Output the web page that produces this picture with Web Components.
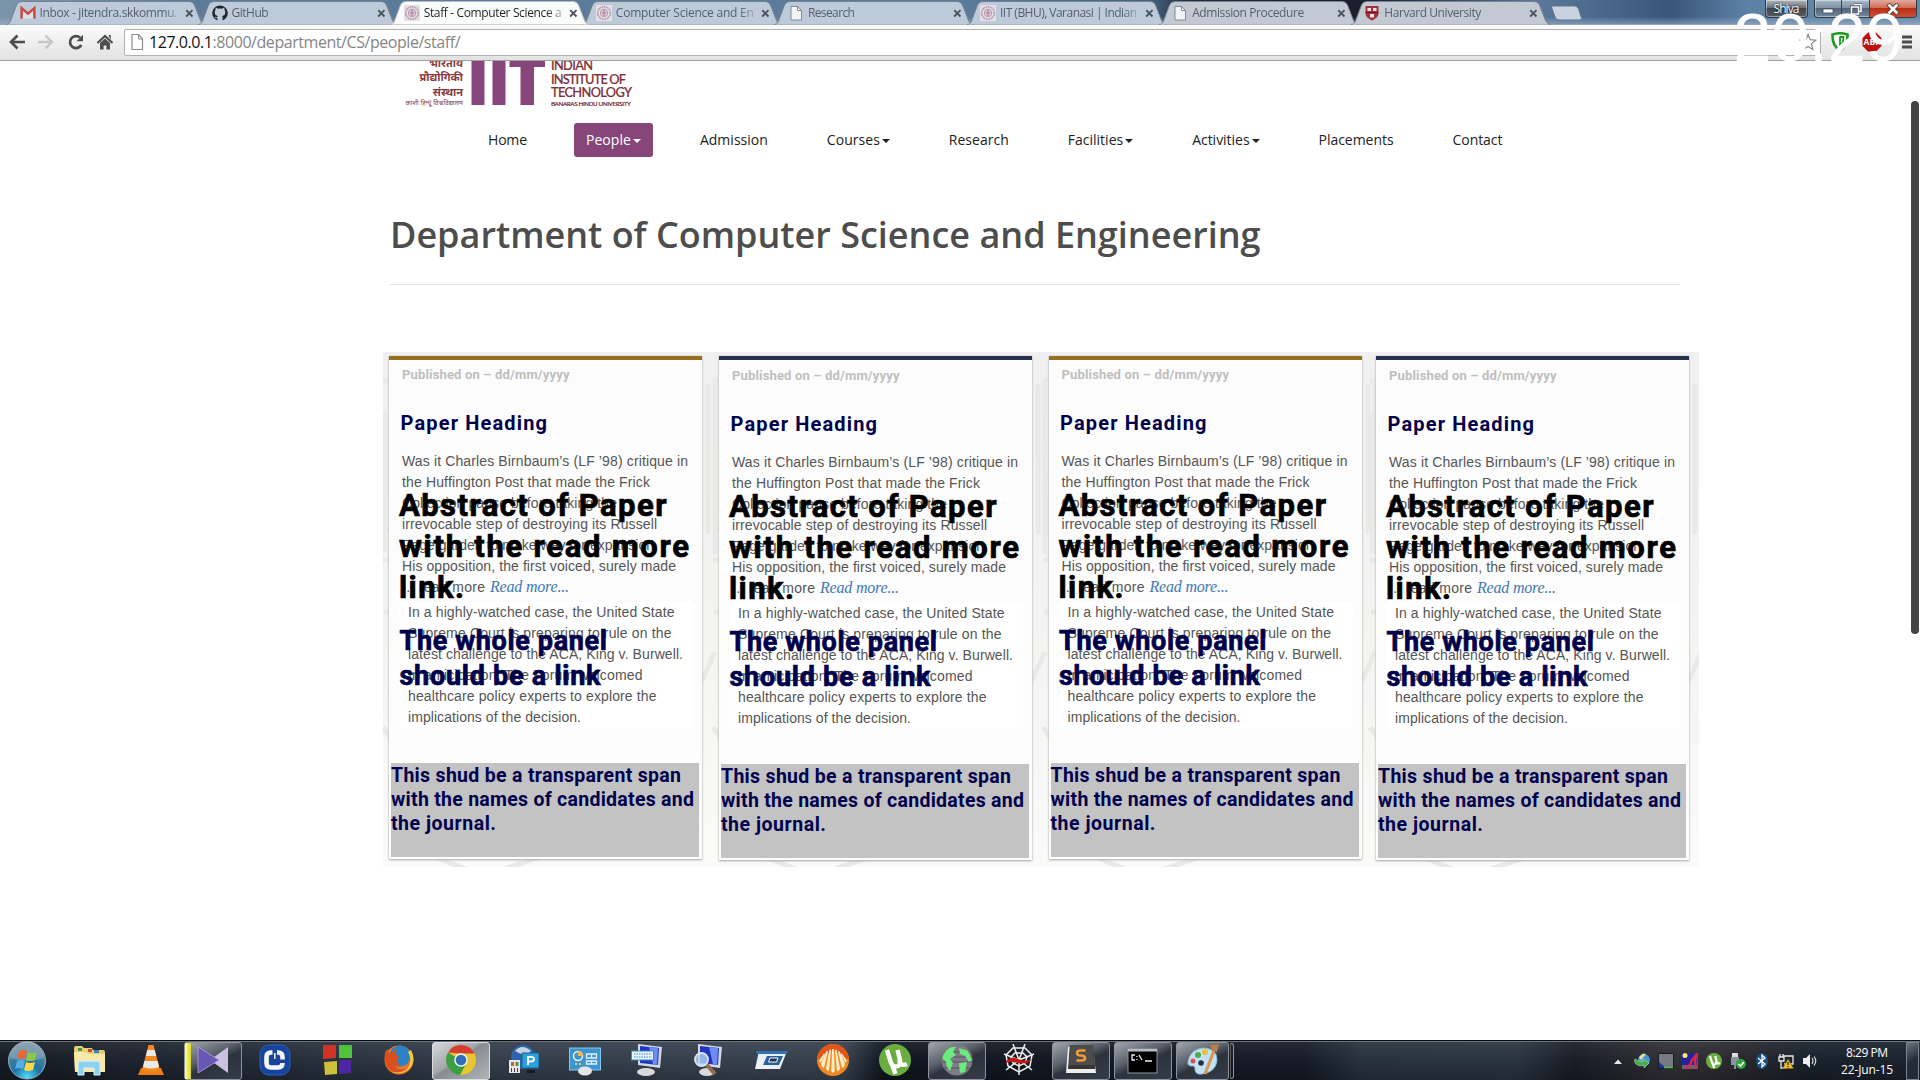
<!DOCTYPE html>
<html lang="en">
<head>
<meta charset="utf-8">
<title>Staff - Computer Science and Engineering</title>
<style>
html,body{margin:0;height:100%;overflow:hidden;background:#fff}
body{font-family:"Open Sans","Noto Sans",sans-serif}
</style>
</head>
<body>
<desktop-screen></desktop-screen>
<script>
const define = (name, html, setup) => {
  const tpl = document.createElement('template');
  tpl.innerHTML = html;
  customElements.define(name, class extends HTMLElement {
    connectedCallback() {
      if (this.shadowRoot) return;
      this.attachShadow({mode: 'open'}).appendChild(tpl.content.cloneNode(true));
      if (setup) setup(this, this.shadowRoot);
    }
  });
};

/* A single line of text tracked out (or in) to a given width. */
const lines = [];
define('text-line', `<style>:host{display:block;white-space:pre}span{display:inline-block;line-height:inherit}</style><span><slot></slot></span>`, h => lines.push(h));
const fitLines = () => lines.forEach(h => {
  const w = +h.getAttribute('w'); if (!w) return;
  const s = h.shadowRoot.querySelector('span');
  s.style.letterSpacing = '0px';
  const n = h.textContent.length, nat = s.getBoundingClientRect().width;
  s.style.letterSpacing = ((w - nat) / (n - 1)) + 'px';
  h.style.width = w + 'px';
});

const seal = `<rect width="16" height="16" fill="#e3dfe6"/><circle cx="8" cy="8" r="6.300" fill="none" stroke="#b492a7" stroke-width="1.600" stroke-dasharray="1.200 .6"/><circle cx="8" cy="8" r="3.600" fill="#dfced8" stroke="#b492a7"/><path d="M8 5v6M6 8h4" stroke="#a57a94"/>`;
const page = `<path d="M3 1.500h6.500l4 4v9.500H3z" fill="#f4f5f6" stroke="#84898f"/><path d="M9.500 1.500v4h4" fill="none" stroke="#84898f"/>`;
const fav = {
  gmail: `<path d="M3 4v9.500h10V4L8 8.500z" fill="#eee" opacity=".7"/><path d="M1.600 13.500V3.200L8 8.600l6.400-5.400v10.300" fill="none" stroke="#c9493d" stroke-width="2.400"/>`,
  github: `<path d="M8 .6a7.600 7.600 0 0 0-2.600 14.800v-2.300c-1.500.3-2.300-.2-2.800-1.400.8-.1 1.400 1 2.800.6 0-.6.2-1 .5-1.300C3.700 10.700 2.700 9.700 2.700 7.300c0-.9.3-1.600.9-2.200-.2-.7-.1-1.600.1-2.300.9 0 1.600.4 2.300.9 1.300-.3 2.700-.3 4 0 .7-.5 1.400-.9 2.300-.9.2.7.3 1.600.1 2.300.6.600.9 1.300.9 2.200 0 2.400-1 3.400-3.200 3.700.4.300.5.900.5 1.600v2.800A7.600 7.600 0 0 0 8 .6z" fill="#20252c"/>`,
  seal, page,
  harvard: `<path d="M1.500 1h13v7.500c0 3.500-3.500 5.500-6.500 7-3-1.500-6.500-3.500-6.500-7z" fill="#a3303c"/><path d="M3.500 3h3.500v3H3.500zM9 3h3.500v3H9zM6 9h4v3.500H6z" fill="#efdfe0"/><path d="M1.500 7.500h13" stroke="#6b1a24"/>`
};

define('browser-tab', `<style>
:host{display:block;position:relative;width:200px;height:25px;margin-right:-7.900px;flex:none;color:#56606c;font:12px/16px "Open Sans",sans-serif}
:host([active]){color:#1f2226;z-index:2}
.shape{position:absolute;inset:0}
.row{position:relative;display:flex;align-items:center;padding:5px 0 0 13.500px;height:16px}
.label{margin-left:4px;width:140px;overflow:hidden;-webkit-mask:linear-gradient(90deg,#000 88%,#0003)}
</style><svg class="shape" width="200" height="25"><path class="p" d="M0 24.500C4 24.500 4.500 21 6 17L10.500 5Q12 1.500 16 1.500H183Q187 1.500 188.500 5L193.500 18Q195.500 24.500 200 24.500" stroke="#76828f" stroke-width="1"/></svg>
<div class="row"><svg class="icon" width="16" height="16"></svg><div class="label"><slot></slot></div><svg width="9" height="9" style="margin-left:5px"><path d="M1.200 1.200l6.300 6.300M7.500 1.200L1.200 7.500" stroke="#4c545d" stroke-width="1.900"/></svg></div>`,
(h, r) => {
  r.querySelector('.icon').innerHTML = fav[h.getAttribute('icon')];
  r.querySelector('.p').setAttribute('fill', h.hasAttribute('active') ? '#fafbfb' : h.hasAttribute('grey') ? '#c3c9d2' : '#bdcad9');
  if (h.hasAttribute('active')) r.querySelector('.p').setAttribute('stroke', '#b5bcc4');
});

define('browser-chrome', `<style>
:host{display:block;position:relative;height:61px;overflow:hidden}
.strip{height:25px;box-sizing:border-box;display:flex;padding-left:6px;border-bottom:1px solid #9aa4ae;background:linear-gradient(180deg,transparent 70%,#9fb8d088),linear-gradient(90deg,#7d95ab 0,#5d7b98 10%,#5b7b9b 50%,#46617c 60%,#212b39 62%,#1b1e2c 71%,#3b5269 76%,#59789a 80%,#39577a 87%,#5d81a6 91%,#688aa9)}
.new{margin:5px 0 0 8px}
.fill{flex:1}
.user,.win{height:18px;border:1px solid #2d3b4a;border-top:0;border-radius:0 0 4px 4px;box-sizing:border-box;box-shadow:inset 0 0 0 1px #ffffff66;display:flex}
.user{width:43px;margin-right:6px;background:linear-gradient(#b5b9bf,#6c7178 45%,#41464e 50%,#565e68);color:#fff;font:12px/18px "Open Sans";justify-content:center;text-shadow:0 0 2px #000}
.win{width:103px;margin-right:3px;background:linear-gradient(#a9bacb,#8192a4 45%,#526477 50%,#768a9e);overflow:hidden}
.win i{width:27px;border-right:1px solid #35424f;display:flex;align-items:center;justify-content:center}
.win i:last-child{width:47px;border:0;background:linear-gradient(#e2ab9f,#cf6d57 45%,#b92c16 50%,#c75336)}
.bar{height:36px;box-sizing:border-box;display:flex;align-items:center;border-bottom:1px solid #a0a0a0;background:linear-gradient(#fbfbfb,#e2e2e2);padding:0 0 1px 8px}
.bar>svg{flex:none}
.omni{margin-left:10px;width:1697px;height:27px;box-sizing:border-box;border:1px solid #b0b0b0;border-radius:2px;background:#fff;display:flex;align-items:center;padding:0 3px 0 4px;font:16px/24px "Open Sans",sans-serif;color:#858585}
.omni b{font-weight:400;color:#111}
.clock{position:absolute;left:1733.500px;top:-1px;z-index:5;font:68px/77px "Liberation Sans",sans-serif;color:#fff;white-space:pre}
</style>
<div class="strip">
<browser-tab icon="gmail"><text-line w="138">Inbox - jitendra.skkommu.</text-line></browser-tab>
<browser-tab icon="github"><text-line w="37">GitHub</text-line></browser-tab>
<browser-tab icon="seal" active><text-line w="138">Staff - Computer Science a</text-line></browser-tab>
<browser-tab icon="seal"><text-line w="138">Computer Science and En</text-line></browser-tab>
<browser-tab icon="page"><text-line w="47">Research</text-line></browser-tab>
<browser-tab icon="seal"><text-line w="137">IIT (BHU), Varanasi | Indian</text-line></browser-tab>
<browser-tab icon="page" grey><text-line w="112">Admission Procedure</text-line></browser-tab>
<browser-tab icon="harvard" grey><text-line w="97">Harvard University</text-line></browser-tab>
<svg class="new" width="31" height="16"><path d="M1.500 1h22q3 0 4 3l3 9q.5 2-2 2H8q-3 0-4-3L.8 3Q.5 1 1.500 1z" fill="#c9d3df" stroke="#65788c"/></svg>
<div class="fill"></div>
<div class="user"><text-line w="26">Shiva</text-line></div>
<div class="win"><i><svg width="12" height="12"><path d="M1 6h10v4H1z" fill="#fff" stroke="#3d4a58" stroke-width=".8"/></svg></i><i><svg width="12" height="12"><path d="M4 1.500h7v7H9M1.500 4h7v7h-7z" fill="none" stroke="#3d4a58" stroke-width="3"/><path d="M4 1.500h7v7H9M1.500 4h7v7h-7z" fill="none" stroke="#fff" stroke-width="1.600"/></svg></i><i><svg width="14" height="12"><path d="M2 1l10 10M12 1L2 11" stroke="#5a2a24" stroke-width="4.500"/><path d="M2.500 1.500l9 9M11.500 1.500l-9 9" stroke="#fff" stroke-width="2.800"/></svg></i></div>
</div>
<div class="bar">
<svg width="18" height="18"><path d="M9.500 2.500L3 9l6.500 6.500M3.500 9H17" fill="none" stroke="#4d4d4d" stroke-width="2.700"/></svg>
<svg width="18" height="18" style="margin-left:11px"><path d="M8.500 2.500L15 9l-6.500 6.500M14.500 9H1" fill="none" stroke="#c6c6c6" stroke-width="2.400"/></svg>
<svg width="18" height="18" style="margin-left:12px"><path d="M14.300 12A6 6 0 1 1 13 4.600" fill="none" stroke="#4d4d4d" stroke-width="2.700"/><path d="M9.500 8.200H16V1.700z" fill="#4d4d4d"/></svg>
<svg width="18" height="18" style="margin-left:11px"><path d="M1.500 10L9 3l7.500 7" fill="none" stroke="#4d4d4d" stroke-width="2.300"/><path d="M4 10l5-4.500 5 4.500v6.500h-3.600v-4H7.600v4H4zM12.500 2h2.200v5z" fill="#4d4d4d"/></svg>
<div class="omni"><svg width="17" height="18"><path d="M3 1.500h6.500l4 4.500v10.500H3z" fill="#fff" stroke="#8c8c8c" stroke-width="1.200"/><path d="M9.500 1.500V6h4" fill="none" stroke="#8c8c8c"/></svg>
<text-line w="311.500" style="margin-left:3px"><b>127.0.0.1</b>:8000/department/CS/people/staff/</text-line><div class="fill"></div>
<svg width="18" height="18"><path d="M9 1.500l2.200 5.200 5.600.5-4.300 3.700 1.300 5.500L9 13.500l-4.800 2.900 1.300-5.500L1.200 7.200l5.600-.5z" fill="#fff" stroke="#888" stroke-width="1.200"/></svg></div>
<svg width="18" height="20" style="margin-left:10px"><path d="M1.500 2.500q7.500-2.500 15 0 .5 11-7.500 16Q1 13.500 1.500 2.500z" fill="#fff" stroke="#1c9a22" stroke-width="2.600"/><path d="M9 4.500v11M9 5h3.500q0 6-3.500 9" stroke="#1c9a22" stroke-width="1.800" fill="none"/></svg>
<svg width="20" height="20" style="margin-left:13px"><path d="M6 .5h8l5.500 5.500v8L14 19.500H6L.5 14V6z" fill="#b9120f"/><text x="1.500" y="13.300" font-family="Open Sans" font-weight="700" font-size="9" fill="#fff" textLength="17" lengthAdjust="spacingAndGlyphs">ABP</text></svg>
<svg width="14" height="16" style="margin-left:18px"><path d="M2 3h10M2 8h10M2 13h10" stroke="#4d4d4d" stroke-width="2.800"/></svg>
</div>
<div class="clock">20:29</div>`);

define('iit-logo', `<style>
:host{display:flex;height:47px;width:260px;overflow:hidden;margin-left:401px}
.hi{width:62px;display:flex;flex-direction:column;align-items:flex-end;color:#8b3a3f;font:700 11px/14.300px "Noto Sans Devanagari","Noto Sans",sans-serif;margin-top:-4px;white-space:nowrap}
.hi small{font-weight:400;font-size:6.700px;line-height:8px}
svg{margin-left:8px;flex:none}
.en{margin:-2px 0 0 5px;color:#7d3037;font:500 12.800px/13.600px Lato,sans-serif;-webkit-text-stroke:.2px currentColor}
.en text-line:last-child{font-size:6.200px;line-height:8px}
</style>
<div class="hi"><div>भारतीय</div><div>प्रौद्योगिकी</div><div>संस्थान</div><small>काशी हिन्दू विश्वविद्यालय</small></div>
<svg width="75" height="44"><path d="M.5 0h13v44H.500zM21.500 0h13v44h-13zM38.500 0H74v6H63v38H49.500V6h-11z" fill="#874679"/></svg>
<div class="en"><text-line w="42">INDIAN</text-line><text-line w="75">INSTITUTE OF</text-line><text-line w="81">TECHNOLOGY</text-line><text-line w="80">BANARAS HINDU UNIVERSITY</text-line></div>`);

define('nav-item', `<style>
:host{display:flex;align-items:center;height:34px;padding:0 12px;border-radius:3px;font:14px/20px "Open Sans",sans-serif;color:#222}
:host([active]){background:#874679;color:#fff}
i{display:none;margin:2px 0 0 2px;border:4px solid transparent;border-top-color:currentColor;border-bottom:0}
:host([menu]) i{display:block}
</style><slot></slot><i></i>`);

define('paper-card', `<style>
:host{display:flex;flex-direction:column;box-sizing:border-box;width:313px;height:503px;padding:7px 0 0;border-top:4px solid #95701f;position:relative;background:#fdfdfdeb;box-shadow:0 1px 2px #aaa,0 0 1px #bbb;color:#555;font:14px/21px "Liberation Sans",Arial,sans-serif}
:host([blue]){border-top-color:#27334c;padding-top:8px;height:504px}
.date,h3,.over,footer{font-family:Roboto,sans-serif;font-weight:700}
.date{font-size:13px;line-height:15px;color:#bfbfbf;padding-left:13px}
h3{margin:29px 0 0 11.500px;font-size:20px;line-height:24px;color:#00004d}
.one{margin:15.500px 0 0 13px}
.last{display:flex}
a{color:#4078b3;font:italic 16px/21px "Liberation Serif",serif;margin:-1px 0 1px 5px}
.two{margin:4px 9px 0 10px;padding-left:9px;background:#fffc}
footer{margin:auto 3px 2px 2px;height:94px;box-sizing:border-box;padding:.5px 0 0;background:#c3c3c3;color:#00004d;font-size:19.500px;line-height:24px}
.over{position:absolute;left:10px;top:125px;color:#000;font-size:31px;line-height:41px;-webkit-text-stroke:.7px currentColor}
:host([blue]) .over{top:126px}
.over div{margin:16px 0 0 .5px;color:#00004d;font-size:27px;line-height:34.500px}
</style>
<div class="date"><text-line w="167.500">Published on – dd/mm/yyyy</text-line></div>
<h3><text-line w="146.500">Paper Heading</text-line></h3>
<div class="one">
<text-line w="286">Was it Charles Birnbaum’s (LF ’98) critique in</text-line><text-line w="248">the Huffington Post that made the Frick</text-line><text-line w="215">Collection pause before taking the</text-line><text-line w="255">irrevocable step of destroying its Russell</text-line><text-line w="256">Page garden to make way for expansion.</text-line><text-line w="274">His opposition, the first voiced, surely made</text-line><div class="last"><text-line w="83">... read more</text-line><a><text-line w="79">Read more...</text-line></a></div></div>
<div class="two"><text-line w="266.500">In a highly-watched case, the United State</text-line><text-line w="263.500">Supreme Court is preparing to rule on the</text-line><text-line w="275">latest challenge to the ACA, King v. Burwell.</text-line><text-line w="234.500">In anticipation, The Forum welcomed</text-line><text-line w="248.500">healthcare policy experts to explore the</text-line><text-line w="173">implications of the decision.</text-line></div>
<footer><text-line w="290">This shud be a transparent span</text-line><text-line w="303">with the names of candidates and</text-line><text-line w="105">the journal.</text-line></footer>
<div class="over"><text-line w="267.500">Abstract of Paper</text-line><text-line w="290">with the read more</text-line><text-line w="65">link.</text-line><div><text-line w="207.500">The whole panel</text-line><text-line w="201">should be a link</text-line></div></div>`);

define('paper-panel', `<style>
:host{display:flex;position:relative;box-sizing:border-box;width:1316px;height:515px;padding:4px 0 0 6px;margin:67px 0 0 383px;background:linear-gradient(#f0f0f0,#f3f3f2 50%,#fafaf9)}
.bg{position:absolute;inset:0}
paper-card+paper-card{margin-left:17px}
paper-card:nth-of-type(3){margin-left:16.500px}
paper-card:last-of-type{margin-left:14.500px}
</style>
<svg class="bg" width="1316" height="515" fill="none" stroke="#e9e9e7" stroke-width="5"></svg>
<paper-card></paper-card><paper-card blue></paper-card><paper-card></paper-card><paper-card blue></paper-card>`,
(h, r) => {
  let d = '';
  for (const x of [0, 330, 660, 987]) d += `M${x} 30q12 -6 18 0M${x} 178h26M${x} 208h14M${x+2} 60v140M${x+1} 260h16v75M${x} 375l24 35v60M${x+40} 500l60 24 60 -20M${x+325} 32v150M${x+332} 32v170M${x+318} 330l14 -30`;
  r.querySelector('.bg').innerHTML = `<path d="${d}"/>`;
});

define('web-page', `<style>
:host{display:block;position:relative;height:979px;overflow:hidden;background:#fff}
nav{display:flex;gap:34.950px;margin:15px 0 0 476px}
h1{margin:53px 0 0 390px;font:600 36px/50px "Open Sans",sans-serif;color:#4d4d4d}
hr{margin:24px 240px 0 390px;border:0;height:1px;background:#ddd}
.thumb{position:absolute;left:1911px;top:40px;width:8px;height:533px;border-radius:4px;background:#434343}
</style>
<iit-logo></iit-logo>
<nav><nav-item><text-line w="39">Home</text-line></nav-item><nav-item active menu><text-line w="45">People</text-line></nav-item><nav-item><text-line w="68">Admission</text-line></nav-item><nav-item menu><text-line w="53">Courses</text-line></nav-item><nav-item><text-line w="60">Research</text-line></nav-item><nav-item menu><text-line w="55.500">Facilities</text-line></nav-item><nav-item menu><text-line w="57.500">Activities</text-line></nav-item><nav-item><text-line w="75">Placements</text-line></nav-item><nav-item><text-line w="50">Contact</text-line></nav-item></nav>
<h1><text-line w="870.500">Department of Computer Science and Engineering</text-line></h1>
<hr>
<paper-panel></paper-panel>
<div class="thumb"></div>`);

const app = {
explorer:`<path d="M1 4q0-2 2-2h6l2 2h8l1 2h10q2 0 2 2v20H2z" fill="#e8cf74"/><path d="M5 4h4v3H5z" fill="#3f9b48"/><path d="M15 5h4v3h-4z" fill="#c04d3c"/><path d="M21 6h5v3h-5z" fill="#3b83c6"/><path d="M1 8h12l2 2h17v18H2z" fill="#f7e9a8"/><path d="M5 31V19q0-2 3-2h16q3 0 3 2v12h-6v-7H11v7z" fill="#8fd0ee" stroke="#d9f4ff"/>`,
vlc:`<path d="M6 24h20l3 7H3z" fill="#ee7d16"/><path d="M13.500 1h5l6.500 25q-9 4-18 0z" fill="#f28a1e"/><path d="M12.300 6h7.400l1.500 6H10.800zM9.300 17h13.400l1.300 6q-8 3-16 0z" fill="#e9e9e9"/>`,
km:`<path d="M31 3v26L13 16z" fill="#c9c1dd"/><path d="M1 3l21 13L1 29z" fill="#6a56b5" stroke="#b4a6e0" stroke-width=".8"/>`,
cc:`<rect x="1" y="1" width="30" height="30" rx="9" fill="#17459b" stroke="#2a62bb"/><path d="M13.500 8.500H12q-4.500 0-4.500 4.500v6q0 4.500 4.500 4.500h7q4.500 0 4.500-4.500M18 8.500h1q4.500 0 4.500 4.500v2.500" fill="none" stroke="#f3f6fa" stroke-width="4.600"/><path d="M15.800 9v6" stroke="#f3f6fa" stroke-width="1.500"/>`,
sq:`<path d="M2 1h13v13L2 15z" fill="#cf3328"/><path d="M18 1h13v13H18z" fill="#4fc13c"/><path d="M3 18l13-1v13L4 31z" fill="#c9c03c"/><path d="M18 16h12v13l-12 1z" fill="#4d27a3"/>`,
ff:`<circle cx="16" cy="16" r="14.500" fill="#e8762a"/><circle cx="17" cy="12" r="10.500" fill="#2a82c4"/><path d="M28 6q5 9 0 17-8 9-19 5 14 2 17-6 3-7-1-14z" fill="#f6c945"/><path d="M2 8q-2 12 5 18 8 5 16-1-9 2-11-3 4 0 5-2-3-1-3-4 1-2 3-3-4-1-5-3 1-3 3-4-5 0-8 3-2-1-2-4z" fill="#d9501e"/>`,
chrome:`<circle cx="16" cy="16" r="15" fill="#e8c62e"/><path d="M3 8.500A15 15 0 0 1 29.500 9.500H16z" fill="#d73c31"/><path d="M3 8.500A15 15 0 0 0 15 31l6-11-5-4z" fill="#3c9f46"/><circle cx="16" cy="16" r="6.800" fill="#f2f2f2"/><circle cx="16" cy="16" r="5.300" fill="#2f6fb7"/>`,
p:`<circle cx="16" cy="13" r="12" fill="#2b64ad"/><path d="M8 7q7-8 16 0l-6 5z" fill="#c8d5e2"/><path d="M15 9h17v15H15z" fill="#2ba1dc" stroke="#1c5f8f"/><path d="M21 21v-8h3q3.500 0 3 2.500-.5 2-3 2h-3" fill="none" stroke="#fff" stroke-width="1.800"/><path d="M2 16h11v13H2z" fill="#e6e6e3"/><path d="M4 18h3v4H4z" fill="#cf6233"/><path d="M8.500 18h3v4h-3z" fill="#469746"/><path d="M4.500 24v4M7.500 24v4M10.500 24v4" stroke="#444"/><path d="M20 26h8v3h-8z" fill="#161a20"/>`,
cp:`<rect x=".5" y="4" width="31" height="22" fill="#3d95cd" stroke="#83c7ec"/><circle cx="9" cy="12" r="4.500" fill="none" stroke="#e7f5fc" stroke-width="1.500"/><path d="M9 12V7a5 5 0 0 1 5 5z" fill="#f3b64a"/><path d="M17.500 10h10v4h-10zM17.500 17h10v3h-10zM22.500 10v4M22.500 17v3" fill="none" stroke="#dff1fb" stroke-width="1.300"/><path d="M6 20h7" stroke="#f3c56f" stroke-width="2" stroke-dasharray="2 2"/><ellipse cx="16" cy="27" rx="7" ry="4.500" fill="#e3e5e7"/>`,
kb:`<path d="M7 0l24 3-2 21-22-3z" fill="#d5d9e0"/><path d="M9 2l19 2-1 17-18-2z" fill="#2233c0"/><path d="M18 3l9 1-1 17-4-1z" fill="#6e8df2"/><ellipse cx="15" cy="28" rx="9" ry="4" fill="#d7d9db"/><rect x=".5" y="7" width="22" height="9" fill="#e7f4fb" stroke="#388ac2"/><path d="M3 10h18M3 13h18" stroke="#388ac2" stroke-dasharray="1.500 1"/>`,
mag:`<path d="M5 0l24 3-2 21-22-3z" fill="#d5d9e0"/><path d="M7 2l19 2-1 17-18-2z" fill="#2233c0"/><path d="M16 3l9 1-1 17-4-1z" fill="#6e8df2"/><ellipse cx="14" cy="28" rx="8" ry="4" fill="#d7d9db"/><path d="M13 20l9 10" stroke="#946a4c" stroke-width="4"/><circle cx="8.500" cy="15.500" r="6.500" fill="#b3d5f3cc" stroke="#dae5ee" stroke-width="1.800"/>`,
run:`<path d="M4 7h28l-7 18H0z" fill="#e9f0f6"/><path d="M1 7h31l-1 3H2z" fill="#2f72b5"/><path d="M12 12h16l-4 9H8z" fill="#2a5f9f"/><path d="M15 14h8l-1.500 4h-8z" fill="#18324f" stroke="#fff"/>`,
bit:`<circle cx="16" cy="16" r="16" fill="#ef8a22"/><path d="M0 16a16 16 0 0 1 32 0L16 6z" fill="#e0561a"/><path d="M15.200 5h1.600l1 22q-1.800 3-3.600 0zM12.500 5.500l1.500.5-2 21q-2.500 0-3-2.500zM19.500 5.500l-1.500.5 2 21q2.500 0 3-2.500zM9.500 7l1.500.5L7 24q-2.500-1-3-4zM22.500 7l-1.500.5L25 24q2.500-1 3-4zM7 9.500l1 .500-4 8.500-2-1.500zM25 9.500l-1 .500 4 8.500 2-1.500z" fill="#fdeec8"/>`,
ut:`<circle cx="16" cy="16" r="16" fill="#6aad40"/><path d="M8 6l4 13q2 5 7 3 3-2 2-6l-2.500-10M20 16q2 7 8 4M12.500 19l4 11" stroke="#fff" stroke-width="4.400" fill="none"/>`,
globe:`<circle cx="16" cy="16" r="15.500" fill="#7c7b86"/><path d="M3 8h26M1 13h30M1 18h30M3 24h26" stroke="#585461"/><path d="M4 8q5-6 11-5l-3 5 3 3-6 4 3 4-3 8q-4-4-4-9l-4-4zM18 4l9 3 4 9-3 2-4-6-5-2zM18 19l8-1-2 10-5 1z" fill="#69eb7d"/>`,
spider:`<g fill="none" stroke="#eee" stroke-width="1.500"><path d="M16 16V31M16 16L10 0M16 16L22 0M16 16L1 10M16 16l15-6M16 16L3 26M16 16l13 10" /><path d="M10 4h12l7 7-2 11-11 6-11-6-2-11zM12 9h8l4 4-2 6-6 3-6-3-2-6z"/></g><path d="M3 17q6-6 12-2 7 3 14 0l-4 4q-9 1-14-1-4-1-8 1z" fill="#c51716"/>`,
sub:`<path d="M3 3h25l3 26H1z" fill="#ededed"/><path d="M5 1h23q2 14 2 24H3Q4 12 5 1z" fill="#353535"/><path d="M5 1h23l1 20H4z" fill="#4c4c4c"/><path d="M20.500 6.500h-5q-3.500 0-3.500 2.500t4 2.500 4 2.500-3.500 2.500h-5" fill="none" stroke="#f19b37" stroke-width="2.600"/>`,
cmd:`<rect x="1" y="5" width="29" height="24" fill="#000" stroke="#8e959c"/><path d="M1 5h29v2.500H1z" fill="#b7bec5"/><path d="M8 11H5v5h3M10 12v1M10 15v1M12 11l3 5M18 17h7" fill="none" stroke="#f2f2f2" stroke-width="1.300"/>`,
paint:`<path d="M1 18Q3 5 17 4q13 1 13 12-1 12-15 14-7 1-7-5 0-4-4-3-4-1-3-4z" fill="#c3e1f2" stroke="#92bedb"/><circle cx="11" cy="11" r="3" fill="#4eab4e"/><circle cx="18" cy="8" r="3" fill="#e9c13e"/><circle cx="6" cy="17" r="2.500" fill="#d9534c"/><circle cx="14" cy="19" r="2.800" fill="#213044"/><path d="M28 4L18 30" stroke="#d29a52" stroke-width="3"/><path d="M23 1l9-1-2 8-5-1z" fill="#b77c4c"/>`
};
define('task-icon', `<style>
:host{display:flex;align-items:center;justify-content:center;box-sizing:border-box;width:58px;height:38px;margin-right:4px;flex:none;position:relative}
:host([open]){border:1px solid #8d949d;border-radius:3px;background:linear-gradient(155deg,#a1a6ac 0,#5c636c 38%,#2c333c 55%,#343c47)}
:host([lit]){border:1px solid #dadde0;background:linear-gradient(145deg,#d6d8da,#a5a8ac 42%,#888c91 48%,#b2b4b7)}
:host([narrow]){width:53px}
:host([mark])::before{content:"";position:absolute;left:0;top:0;width:6px;height:36px;background:linear-gradient(90deg,#fffca0,#d9d524)}
svg{margin-top:-1px}
</style><svg width="32" height="32"></svg>`, (h, r) => r.querySelector('svg').innerHTML = app[h.getAttribute('icon')]);

define('task-bar', `<style>
:host{display:flex;align-items:center;height:40px;box-sizing:border-box;border-top:1px solid #0a0c10;box-shadow:inset 0 1px #697681;background:linear-gradient(#ffffff12,transparent 55%,#0003),linear-gradient(90deg,#151b23,#242c37 15%,#333c49 25%,#36404d 44%,#10161f 46%,#141b25 68%,#27313c 71%,#29333e 79%,#171c25 82%,#302f35 87%,#27262c 91%,#18202a 94%,#1b222c);color:#fff}
.orb{margin:0 16px 0 7px;flex:none}
.edge{width:4px;height:36px;border:1px solid #8d949d;border-left-color:#555;border-radius:0 3px 3px 0;margin-left:-3px;box-sizing:border-box}
.tray{display:flex;align-items:center;gap:8px;margin-left:auto;padding-top:1px}
.time{width:78px;margin-left:2px;display:flex;flex-direction:column;align-items:center;font:12px/17px "Open Sans",sans-serif}
.show{width:13px;height:38px;border:1px solid #7b838c;box-sizing:border-box;background:linear-gradient(150deg,#6b737c,#252b34 50%);margin:0 1px 0 -8px}
</style>
<svg class="orb" width="40" height="39"><defs><radialGradient id="g" cx=".5" cy=".95" r=".9"><stop offset="0" stop-color="#52dcf9"/><stop offset=".4" stop-color="#1c74a4"/><stop offset="1" stop-color="#6f8798"/></radialGradient></defs><circle cx="20" cy="19.500" r="18.500" fill="url(#g)" stroke="#8fb4c6"/><path d="M3 17a17 17 0 0 1 34 0q-17 6-34 0z" fill="#ffffff38"/><path d="M12 10q4-2 8 0l-2 8q-4-2-8 0z" fill="#ee6534"/><path d="M21 11q4 2 9 0l-2 8q-5 2-9 0z" fill="#8dc749"/><path d="M10 20q4-2 8 0l-2 8q-4-2-8 0z" fill="#59aee6"/><path d="M19 21q4 2 9 0l-2 8q-5 2-9 0z" fill="#fbd54a"/></svg>
<task-icon icon="explorer" style="margin-left:-3px"></task-icon><task-icon icon="vlc"></task-icon><task-icon icon="km" open mark></task-icon><task-icon icon="cc"></task-icon><task-icon icon="sq"></task-icon><task-icon icon="ff"></task-icon><task-icon icon="chrome" open lit></task-icon><task-icon icon="p"></task-icon><task-icon icon="cp"></task-icon><task-icon icon="kb"></task-icon><task-icon icon="mag"></task-icon><task-icon icon="run"></task-icon><task-icon icon="bit"></task-icon><task-icon icon="ut"></task-icon><task-icon icon="globe" open></task-icon><task-icon icon="spider"></task-icon><task-icon icon="sub" open></task-icon><task-icon icon="cmd" open></task-icon><task-icon icon="paint" open narrow></task-icon><div class="edge"></div>
<div class="tray">
<svg width="8" height="5" style="margin-right:4px"><path d="M0 5l4-4.500L8 5z" fill="#e8e8e8"/></svg>
<svg width="16" height="16"><circle cx="10" cy="7" r="6" fill="#4496d0"/><path d="M5 5q3-6 7-4l-5 6z" fill="#dfe49b"/><path d="M1 6q-2 5 5 7l4-1v3l5-5-6-4v3Q5 9 1 6z" fill="#3dac49" stroke="#dbe9b0" stroke-width=".5"/></svg>
<svg width="16" height="16"><path d="M.5.5h15v15H.500z" fill="#777983" stroke="#191b20"/><path d="M1 9l7 6H1z" fill="#1a31a8"/><path d="M6 14.500h9" stroke="#56be4c" stroke-width="1.500"/></svg>
<svg width="16" height="16"><path d="M0 0h16v16H0z" fill="#26219f"/><path d="M0 12h16v4H0z" fill="#6e6272"/><circle cx="3" cy="2.500" r="2.500" fill="#f7eb5b"/><path d="M3 14l5-2 2-5 4-5-1 7 1 5" stroke="#df274a" stroke-width="2.300" fill="none"/><path d="M15.500 0v16H1" stroke="#d12444" fill="none"/></svg>
<svg width="16" height="16" viewBox="0 0 32 32">${app.ut}</svg>
<svg width="16" height="16"><path d="M2 0h6v4H2z" fill="#ddd"/><path d="M1 4h8v8H1zM4 12h2v4H4z" fill="#8b9298"/><circle cx="11" cy="11" r="5" fill="#31a43c"/><path d="M8.500 11l2 2 3.300-4" fill="none" stroke="#fff" stroke-width="1.600"/></svg>
<svg width="16" height="16"><path d="M8 0q6 1 6 8t-6 8q-6-1-6-8t6-8" fill="#164d83"/><path d="M4 5l7 6-3 3V2l3 3-7 6" stroke="#fff" fill="none" stroke-width="1.300"/></svg>
<svg width="16" height="16"><path d="M5 3h10v8H6M2 1v3M5 1v3M1 4h5v4H1zM3 8v7h5" fill="none" stroke="#e9e9e9" stroke-width="1.300"/><path d="M10 6l5.500 9.500h-11z" fill="#f4bd2d" stroke="#7e5b18" stroke-width=".6"/><path d="M10 9v3M10 13v1.200" stroke="#222" stroke-width="1.300"/></svg>
<svg width="16" height="16"><path d="M1 5h3l4-4v14l-4-4H1z" fill="#eee"/><path d="M10 5q2 3 0 6M12 3.500q3.500 4.500 0 9" stroke="#ddd" fill="none" stroke-width="1.200"/></svg>
<div class="time"><text-line w="42">8:29 PM</text-line><text-line w="52">22-Jun-15</text-line></div>
<div class="show"></div></div>`);

define('desktop-screen', `<style>:host{display:flex;flex-direction:column;width:1920px;height:1080px;overflow:hidden}</style><browser-chrome></browser-chrome><web-page></web-page><task-bar></task-bar>`);
fitLines();
</script>
</body>
</html>
